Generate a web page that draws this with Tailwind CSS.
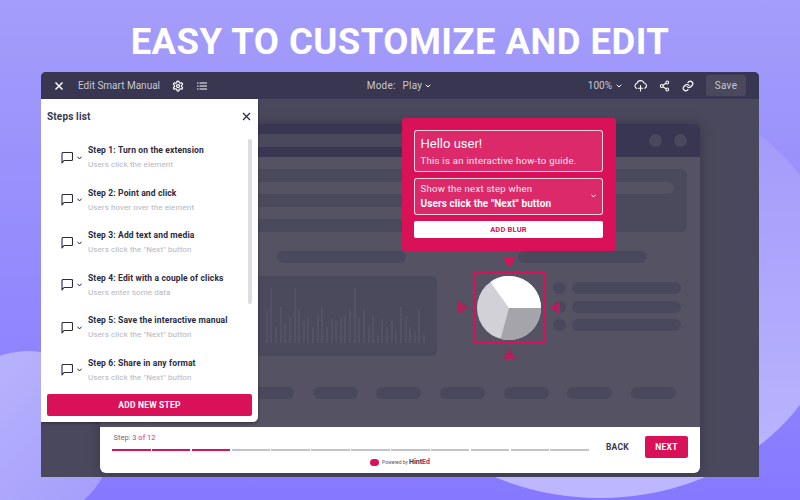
<!DOCTYPE html>
<html>
<head>
<meta charset="utf-8">
<script src="https://cdn.jsdelivr.net/npm/@tailwindcss/browser@4"></script>
</head>
<body class="m-0">
<div class="relative w-[800px] h-[500px] overflow-hidden bg-gradient-to-b from-[#a49dfa] to-[#8679ff] font-['Roboto',sans-serif]">
  <div class="absolute left-[360px] top-[82px] w-[480px] h-[416px] rounded-[50%] bg-gradient-to-b from-[#a197f9] to-[#bdb8fe]"></div>
  <div class="absolute left-[-57px] top-[351px] w-[170px] h-[170px] rounded-full bg-gradient-to-tl from-[#a39bfb] to-[#bcb7fd] "></div>

  <div class="relative">
    <h1 class="h-[72px] flex items-center justify-center text-white font-bold text-[36.500px] tracking-[0.46px] leading-none pt-[13px]">EASY TO CUSTOMIZE AND EDIT</h1>

    <div class="ml-[41px] w-[718px] h-[405px] rounded-t-[5px] bg-[#4a485c] flex flex-col overflow-hidden relative">
      <!-- top bar -->
      <div class="h-[27px] flex-none bg-[#383650] grid grid-cols-[1fr_auto_1fr] items-center text-[#c9c8d1] text-[10px]">
        <div class="flex items-center pl-[13px]">
          <svg class="w-[10px] h-[10px]" viewBox="0 0 10 10" fill="none" stroke="#fff" stroke-width="1.5"><path d="M1.5 1.5l7 7M8.500 1.500l-7 7"/></svg>
          <span class="ml-[14px]">Edit Smart Manual</span>
          <svg class="ml-[12px] w-[12px] h-[12px]" viewBox="0 0 24 24" fill="none" stroke="#fff" stroke-width="2.500"><path d="M12.22 2h-.44a2 2 0 0 0-2 2v.18a2 2 0 0 1-1 1.73l-.43.25a2 2 0 0 1-2 0l-.15-.08a2 2 0 0 0-2.73.73l-.22.38a2 2 0 0 0 .73 2.73l.15.1a2 2 0 0 1 1 1.72v.51a2 2 0 0 1-1 1.74l-.15.09a2 2 0 0 0-.73 2.73l.22.38a2 2 0 0 0 2.73.73l.15-.08a2 2 0 0 1 2 0l.43.25a2 2 0 0 1 1 1.73V20a2 2 0 0 0 2 2h.44a2 2 0 0 0 2-2v-.18a2 2 0 0 1 1-1.73l.43-.25a2 2 0 0 1 2 0l.15.08a2 2 0 0 0 2.73-.73l.22-.39a2 2 0 0 0-.73-2.73l-.15-.08a2 2 0 0 1-1-1.74v-.5a2 2 0 0 1 1-1.74l.15-.09a2 2 0 0 0 .73-2.73l-.22-.38a2 2 0 0 0-2.73-.73l-.15.08a2 2 0 0 1-2 0l-.43-.25a2 2 0 0 1-1-1.73V4a2 2 0 0 0-2-2z"/><circle cx="12" cy="12" r="3"/></svg>
          <svg class="ml-[13px] w-[10px] h-[8px]" viewBox="0 0 10 8" fill="none" stroke="#fff" stroke-width="1"><path d="M2.500 1H10M2.500 4H10M2.500 7H10M0 1h1.500M0 4h1.500M0 7h1.500"/></svg>
        </div>
        <div class="flex items-center pr-[2px] tracking-[0.2px]">
          <span>Mode:</span><span class="ml-[7px]">Play</span>
          <svg class="ml-[3px] w-[6px] h-[4px]" viewBox="0 0 6 4" fill="none" stroke="#fff" stroke-width="1"><path d="M.7.7L3 3l2.300-2.300"/></svg>
        </div>
        <div class="flex items-center justify-end pr-[13px]">
          <span>100%</span>
          <svg class="ml-[4px] w-[6px] h-[4px]" viewBox="0 0 6 4" fill="none" stroke="#fff" stroke-width="1"><path d="M.7.7L3 3l2.300-2.300"/></svg>
          <svg class="ml-[12px] w-[13px] h-[13px]" viewBox="0 0 24 24" fill="none" stroke="#fff" stroke-width="2" stroke-linecap="round" stroke-linejoin="round"><path d="M5 17.500A5 5 0 0 1 5.500 8a7 7 0 0 1 13.200-.5A5 5 0 0 1 20 17"/><path d="M12 12v10M8 17h8"/></svg>
          <svg class="ml-[12px] w-[11px] h-[12px]" viewBox="0 0 24 24" fill="none" stroke="#fff" stroke-width="2.400" preserveAspectRatio="none"><circle cx="18" cy="5" r="3"/><circle cx="6" cy="12" r="3"/><circle cx="18" cy="19" r="3"/><path d="M8.600 13.500l6.800 4M15.400 6.500l-6.800 4"/></svg>
          <svg class="ml-[12px] w-[12px] h-[12px]" viewBox="0 0 24 24" fill="none" stroke="#fff" stroke-width="2.400" stroke-linecap="round"><path d="M10 13a5 5 0 0 0 7.500.5l3-3a5 5 0 0 0-7-7l-1.700 1.700"/><path d="M14 11a5 5 0 0 0-7.500-.5l-3 3a5 5 0 0 0 7 7l1.700-1.700"/></svg>
          <div class="ml-[12px] w-[40px] h-[21px] rounded-[3px] bg-[#4a485c] flex items-center justify-center tracking-[0.3px]">Save</div>
        </div>
      </div>

      <!-- canvas -->
      <div class="flex-1 min-h-0 pt-[25px] pb-[4px] px-[59px]">
        <div class="h-full rounded-t-[5px] rounded-b-[6px] bg-[#545263] flex flex-col overflow-hidden shadow-[0_0_14px_rgba(0,0,0,0.25)]">
          <div class="h-[33px] flex-none bg-[#383650] flex items-center pl-[13px] pr-[13px]">
            <div class="w-[390px] h-[13px] bg-[#4a485c] rounded-full"></div>
            <div class="ml-auto flex gap-[12px]">
              <div class="w-[13px] h-[13px] rounded-full bg-[#4a485c]"></div>
              <div class="w-[13px] h-[13px] rounded-full bg-[#4a485c]"></div>
            </div>
          </div>
          <div class="flex-1 min-h-0">
            <div class="mt-[12px] ml-[13px] mr-[13px] h-[63px] rounded-[6px] bg-[#4b495c] pt-[13px] px-[13px]">
              <div class="h-[12px] rounded-full bg-[#545263]"></div>
              <div class="mt-[13px] w-[375px] h-[12px] rounded-full bg-[#545263]"></div>
            </div>
            <div class="mt-[19px] pl-[177px] flex gap-[112px]">
              <div class="w-[129px] h-[12px] rounded-full bg-[#4a485c]"></div>
              <div class="w-[129px] h-[12px] rounded-full bg-[#4a485c]"></div>
            </div>
            <div class="mt-[13px] ml-[13px] h-[80px] flex">
              <div class="w-[324px] h-full rounded-[6px] bg-[#4b495c] flex items-end justify-end gap-[2.630px] pr-[12px] pb-[13px]">
                <div class="w-[2px] h-[33px] bg-[#535164]"></div><div class="w-[2px] h-[55px] bg-[#535164]"></div><div class="w-[2px] h-[16px] bg-[#535164]"></div><div class="w-[2px] h-[36px] bg-[#535164]"></div><div class="w-[2px] h-[20px] bg-[#535164]"></div><div class="w-[2px] h-[25px] bg-[#535164]"></div><div class="w-[2px] h-[55px] bg-[#535164]"></div><div class="w-[2px] h-[33px] bg-[#535164]"></div><div class="w-[2px] h-[22px] bg-[#535164]"></div><div class="w-[2px] h-[25px] bg-[#535164]"></div><div class="w-[2px] h-[16px] bg-[#535164]"></div><div class="w-[2px] h-[27px] bg-[#535164]"></div><div class="w-[2px] h-[36px] bg-[#535164]"></div><div class="w-[2px] h-[16px] bg-[#535164]"></div><div class="w-[2px] h-[24px] bg-[#535164]"></div><div class="w-[2px] h-[22px] bg-[#535164]"></div><div class="w-[2px] h-[25px] bg-[#535164]"></div><div class="w-[2px] h-[27px] bg-[#535164]"></div><div class="w-[2px] h-[33px] bg-[#535164]"></div><div class="w-[2px] h-[55px] bg-[#535164]"></div><div class="w-[2px] h-[25px] bg-[#535164]"></div><div class="w-[2px] h-[33px] bg-[#535164]"></div><div class="w-[2px] h-[16px] bg-[#535164]"></div><div class="w-[2px] h-[27px] bg-[#535164]"></div><div class="w-[2px] h-[8px] bg-[#535164]"></div><div class="w-[2px] h-[24px] bg-[#535164]"></div><div class="w-[2px] h-[16px] bg-[#535164]"></div><div class="w-[2px] h-[22px] bg-[#535164]"></div><div class="w-[2px] h-[12px] bg-[#535164]"></div><div class="w-[2px] h-[36px] bg-[#535164]"></div><div class="w-[2px] h-[27px] bg-[#535164]"></div><div class="w-[2px] h-[16px] bg-[#535164]"></div><div class="w-[2px] h-[12px] bg-[#535164]"></div><div class="w-[2px] h-[33px] bg-[#535164]"></div><div class="w-[2px] h-[8px] bg-[#535164]"></div>
              </div>
              <div class="relative flex-none ml-[36px] -mt-[4px] w-[72px] h-[72px] border-2 border-[#d81159] flex items-center justify-center">
                <svg class="w-[64px] h-[64px]" viewBox="0 0 64 64">
                  <circle cx="32" cy="32" r="32" fill="#d2d1d7"/>
                  <path d="M32 32L13.400 6A32 32 0 0 1 64 32Z" fill="#fff"/>
                  <path d="M32 32H64A32 32 0 0 1 23.600 62.900Z" fill="#a6a4ab"/>
                </svg>
                <svg class="absolute left-[28px] top-[-17px] w-[13px] h-[11px]" viewBox="0 0 13 11"><path d="M0 0h13L6.500 11z" fill="#d81159"/></svg>
                <svg class="absolute left-[28px] bottom-[-17px] w-[13px] h-[11px]" viewBox="0 0 13 11"><path d="M0 11h13L6.500 0z" fill="#b0205c"/></svg>
                <svg class="absolute left-[-17px] top-[27px] w-[11px] h-[13px]" viewBox="0 0 11 13"><path d="M0 0v13L11 6.500z" fill="#b0205c"/></svg>
                <svg class="absolute right-[-17px] top-[27px] w-[11px] h-[13px]" viewBox="0 0 11 13"><path d="M11 0v13L0 6.500z" fill="#b0205c"/></svg>
              </div>
              <div class="ml-[8px] mt-[6px] flex flex-col gap-[6.500px]">
                <div class="flex gap-[6px]"><div class="w-[13px] h-[12px] rounded-full bg-[#4a485c]"></div><div class="w-[109px] h-[12px] rounded-full bg-[#4a485c]"></div></div>
                <div class="flex gap-[6px]"><div class="w-[13px] h-[12px] rounded-full bg-[#4a485c]"></div><div class="w-[109px] h-[12px] rounded-full bg-[#4a485c]"></div></div>
                <div class="flex gap-[6px]"><div class="w-[13px] h-[12px] rounded-full bg-[#4a485c]"></div><div class="w-[109px] h-[12px] rounded-full bg-[#4a485c]"></div></div>
              </div>
            </div>
            <div class="mt-[31px] pl-[149px] flex gap-[18.700px]">
              <div class="w-[45px] h-[12px] rounded-full bg-[#4a485c]"></div>
              <div class="w-[45px] h-[12px] rounded-full bg-[#4a485c]"></div>
              <div class="w-[45px] h-[12px] rounded-full bg-[#4a485c]"></div>
              <div class="w-[45px] h-[12px] rounded-full bg-[#4a485c]"></div>
              <div class="w-[45px] h-[12px] rounded-full bg-[#4a485c]"></div>
              <div class="w-[45px] h-[12px] rounded-full bg-[#4a485c]"></div>
              <div class="w-[45px] h-[12px] rounded-full bg-[#4a485c]"></div>
            </div>
          </div>

          <!-- player footer -->
          <div class="h-[46px] flex-none bg-white pt-[6px] px-[12px]">
            <div class="flex items-start h-[25px]">
              <div class="w-[477px]">
                <div class="h-[10px] pl-[1.500px] text-[7.500px] leading-[10px] text-[#6c6b7a]">Step: <span class="text-[#e0336f]">3 of 12</span></div>
                <div class="mt-[6px] flex gap-[1.300px]">
                  <div class="flex-1 h-[2px] bg-[#d81159]"></div><div class="flex-1 h-[2px] bg-[#d81159]"></div><div class="flex-1 h-[2px] bg-[#d81159]"></div><div class="flex-1 h-[2px] bg-[#c3c3cb]"></div><div class="flex-1 h-[2px] bg-[#c3c3cb]"></div><div class="flex-1 h-[2px] bg-[#c3c3cb]"></div><div class="flex-1 h-[2px] bg-[#c3c3cb]"></div><div class="flex-1 h-[2px] bg-[#c3c3cb]"></div><div class="flex-1 h-[2px] bg-[#c3c3cb]"></div><div class="flex-1 h-[2px] bg-[#c3c3cb]"></div><div class="flex-1 h-[2px] bg-[#c3c3cb]"></div><div class="flex-1 h-[2px] bg-[#c3c3cb]"></div>
                </div>
              </div>
              <div class="ml-[17px] w-[23px] mt-[3px] h-[22px] flex items-center text-[8.500px] font-bold tracking-[0.2px] text-[#383650]">BACK</div>
              <div class="ml-[16px] mt-[3px] w-[43px] h-[22px] rounded-[2px] bg-[#d81159] flex items-center justify-center text-[8.500px] font-bold tracking-[0.3px] text-white">NEXT</div>
            </div>
            <div class="mt-[1px] h-[7px] flex items-center justify-center">
              <div class="w-[9px] h-[7px] rounded-full bg-[#d81159]"></div>
              <span class="ml-[3px] text-[5px] text-[#55546a]">Powered by</span>
              <span class="ml-[1px] text-[7px] font-bold text-[#383650]">Hint<span class="text-[#d81159]">Ed</span></span>
            </div>
          </div>
        </div>
      </div>

      <!-- steps panel -->
      <div class="absolute left-0 top-[27px] w-[217px] h-[323px] bg-white rounded-br-[5px] flex flex-col shadow-[0_1px_3px_rgba(0,0,0,0.4)]">
        <div class="h-[34px] flex-none flex items-center justify-between pl-[6px] pr-[7px]">
          <span class="text-[10px] font-bold tracking-[0.15px] text-[#383650]">Steps list</span>
          <svg class="w-[9px] h-[9px]" viewBox="0 0 9 9" fill="none" stroke="#2b2a40" stroke-width="1.300"><path d="M1 1l7 7M8 1L1 8"/></svg>
        </div>
        <div class="mt-[3.500px] flex-none">
          <div class="h-[42.500px] flex items-center pl-[20px]">
            <svg class="w-[12px] h-[12px] flex-none" viewBox="0 0 12 12" fill="none" stroke="#2b2a40" stroke-width="1.100" stroke-linejoin="round"><path d="M1 1.500a1 1 0 0 1 1-1h8.500a1 1 0 0 1 1 1V7.500a1 1 0 0 1-1 1H3L1 11Z"/></svg>
            <svg class="ml-[4px] w-[5px] h-[4px] flex-none" viewBox="0 0 5 4" fill="none" stroke="#2b2a40" stroke-width="1"><path d="M.5.700L2.500 3 4.500.700"/></svg>
            <div class="ml-[6px]"><div class="text-[8.500px] leading-[11px] font-bold tracking-[0.14px] text-[#2b2a40]">Step 1: Turn on the extension</div><div class="mt-[4px] text-[8px] leading-[10px] tracking-[0.1px] text-[#b5b4bf]">Users click the element</div></div>
          </div>
          <div class="h-[42.500px] flex items-center pl-[20px]">
            <svg class="w-[12px] h-[12px] flex-none" viewBox="0 0 12 12" fill="none" stroke="#2b2a40" stroke-width="1.100" stroke-linejoin="round"><path d="M1 1.500a1 1 0 0 1 1-1h8.500a1 1 0 0 1 1 1V7.500a1 1 0 0 1-1 1H3L1 11Z"/></svg>
            <svg class="ml-[4px] w-[5px] h-[4px] flex-none" viewBox="0 0 5 4" fill="none" stroke="#2b2a40" stroke-width="1"><path d="M.5.700L2.500 3 4.500.700"/></svg>
            <div class="ml-[6px]"><div class="text-[8.500px] leading-[11px] font-bold tracking-[0.14px] text-[#2b2a40]">Step 2: Point and click</div><div class="mt-[4px] text-[8px] leading-[10px] tracking-[0.1px] text-[#b5b4bf]">Users hover over the element</div></div>
          </div>
          <div class="h-[42.500px] flex items-center pl-[20px]">
            <svg class="w-[12px] h-[12px] flex-none" viewBox="0 0 12 12" fill="none" stroke="#2b2a40" stroke-width="1.100" stroke-linejoin="round"><path d="M1 1.500a1 1 0 0 1 1-1h8.500a1 1 0 0 1 1 1V7.500a1 1 0 0 1-1 1H3L1 11Z"/></svg>
            <svg class="ml-[4px] w-[5px] h-[4px] flex-none" viewBox="0 0 5 4" fill="none" stroke="#2b2a40" stroke-width="1"><path d="M.5.700L2.500 3 4.500.700"/></svg>
            <div class="ml-[6px]"><div class="text-[8.500px] leading-[11px] font-bold tracking-[0.14px] text-[#2b2a40]">Step 3: Add text and media</div><div class="mt-[4px] text-[8px] leading-[10px] tracking-[0.1px] text-[#b5b4bf]">Users click the "Next" button</div></div>
          </div>
          <div class="h-[42.500px] flex items-center pl-[20px]">
            <svg class="w-[12px] h-[12px] flex-none" viewBox="0 0 12 12" fill="none" stroke="#2b2a40" stroke-width="1.100" stroke-linejoin="round"><path d="M1 1.500a1 1 0 0 1 1-1h8.500a1 1 0 0 1 1 1V7.500a1 1 0 0 1-1 1H3L1 11Z"/></svg>
            <svg class="ml-[4px] w-[5px] h-[4px] flex-none" viewBox="0 0 5 4" fill="none" stroke="#2b2a40" stroke-width="1"><path d="M.5.700L2.500 3 4.500.700"/></svg>
            <div class="ml-[6px]"><div class="text-[8.500px] leading-[11px] font-bold tracking-[0.14px] text-[#2b2a40]">Step 4: Edit with a couple of clicks</div><div class="mt-[4px] text-[8px] leading-[10px] tracking-[0.1px] text-[#b5b4bf]">Users enter some data</div></div>
          </div>
          <div class="h-[42.500px] flex items-center pl-[20px]">
            <svg class="w-[12px] h-[12px] flex-none" viewBox="0 0 12 12" fill="none" stroke="#2b2a40" stroke-width="1.100" stroke-linejoin="round"><path d="M1 1.500a1 1 0 0 1 1-1h8.500a1 1 0 0 1 1 1V7.500a1 1 0 0 1-1 1H3L1 11Z"/></svg>
            <svg class="ml-[4px] w-[5px] h-[4px] flex-none" viewBox="0 0 5 4" fill="none" stroke="#2b2a40" stroke-width="1"><path d="M.5.700L2.500 3 4.500.700"/></svg>
            <div class="ml-[6px]"><div class="text-[8.500px] leading-[11px] font-bold tracking-[0.14px] text-[#2b2a40]">Step 5: Save the interactive manual</div><div class="mt-[4px] text-[8px] leading-[10px] tracking-[0.1px] text-[#b5b4bf]">Users click the "Next" button</div></div>
          </div>
          <div class="h-[42.500px] flex items-center pl-[20px]">
            <svg class="w-[12px] h-[12px] flex-none" viewBox="0 0 12 12" fill="none" stroke="#2b2a40" stroke-width="1.100" stroke-linejoin="round"><path d="M1 1.500a1 1 0 0 1 1-1h8.500a1 1 0 0 1 1 1V7.500a1 1 0 0 1-1 1H3L1 11Z"/></svg>
            <svg class="ml-[4px] w-[5px] h-[4px] flex-none" viewBox="0 0 5 4" fill="none" stroke="#2b2a40" stroke-width="1"><path d="M.5.700L2.500 3 4.500.700"/></svg>
            <div class="ml-[6px]"><div class="text-[8.500px] leading-[11px] font-bold tracking-[0.14px] text-[#2b2a40]">Step 6: Share in any format</div><div class="mt-[4px] text-[8px] leading-[10px] tracking-[0.1px] text-[#b5b4bf]">Users click the "Next" button</div></div>
          </div>
        </div>
        <div class="mt-[2.500px] mx-[6px] w-[205px] h-[22px] rounded-[2px] bg-[#d81159] flex items-center justify-center text-white text-[8.500px] font-bold tracking-[0.2px] pt-[1px]">ADD NEW STEP</div>
        <div class="absolute left-[207px] top-[40px] w-[4px] h-[165px] rounded-full bg-[#dcdce2]"></div>
      </div>

      <!-- tooltip -->
      <div class="absolute left-[361px] top-[46px] w-[214px] h-[133px] rounded-[3px] bg-[#d81159] pt-[12px] px-[12px]">
        <div class="h-[42px] w-[189px] rounded-[3px] border border-white/80 bg-white/10 pl-[5.500px] pt-[4px] text-white">
          <div class="text-[13px] leading-[17px] font-normal">Hello user!</div>
          <div class="mt-[3px] text-[9.500px] leading-[12px] tracking-[0.28px] text-white/90">This is an interactive how-to guide.</div>
        </div>
        <div class="relative mt-[6px] h-[37px] w-[189px] rounded-[3px] border border-white/80 bg-white/10 pl-[5.500px] pt-[3px] text-white">
          <div class="text-[9.500px] leading-[13px] tracking-[0.28px] text-white/90">Show the next step when</div>
          <div class="mt-[2px] text-[10px] leading-[13px] font-bold tracking-[0.1px]">Users click the "Next" button</div>
          <svg class="absolute right-[6px] top-[15px] w-[5px] h-[4px]" viewBox="0 0 5 4" fill="none" stroke="#fff" stroke-width="1"><path d="M.5.700L2.500 3 4.500.700"/></svg>
        </div>
        <div class="mt-[6px] h-[17px] w-[189px] rounded-[2px] bg-white flex items-center justify-center text-[#d81159] text-[7.500px] font-bold tracking-[0.2px]">ADD BLUR</div>
      </div>
    </div>
  </div>
</div>
</body>
</html>
